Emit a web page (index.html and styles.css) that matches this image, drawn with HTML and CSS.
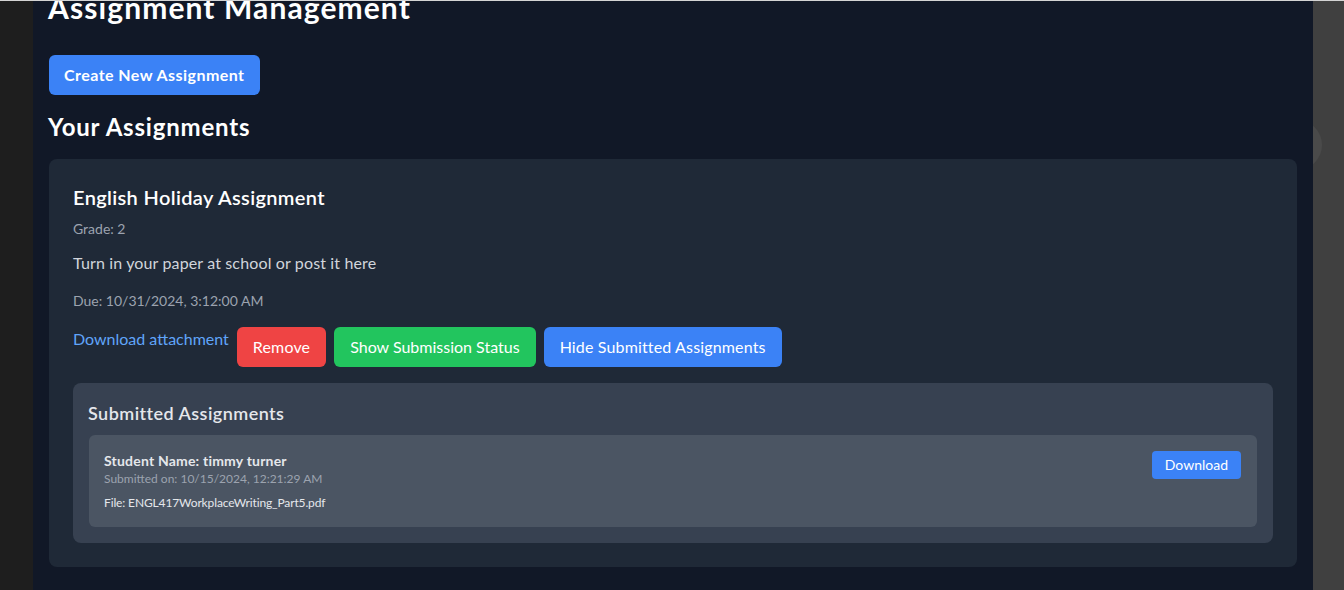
FILE: index.html
```html
<!DOCTYPE html>
<html lang="en">
<head>
<meta charset="utf-8">
<title>Assignment Management</title>
<link rel="stylesheet" href="styles.css">
</head>
<body>
<div class="topline"></div>
<div class="frame">
  <div class="side-left"></div>
  <main class="main">
    <h1 class="page-title">Assignment Management</h1>
    <button class="btn btn-create">Create New Assignment</button>
    <h2 class="section-title">Your Assignments</h2>
    <section class="card">
      <h3 class="card-title">English Holiday Assignment</h3>
      <p class="meta">Grade: 2</p>
      <p class="desc">Turn in your paper at school or post it here</p>
      <p class="meta due">Due: 10/31/2024, 3:12:00 AM</p>
      <div class="actions">
        <a class="link" href="#">Download attachment</a>
        <button class="btn btn-red">Remove</button>
        <button class="btn btn-green">Show Submission Status</button>
        <button class="btn btn-blue">Hide Submitted Assignments</button>
      </div>
      <div class="submitted">
        <h4 class="submitted-title">Submitted Assignments</h4>
        <div class="sub-item">
          <div class="sub-info">
            <p class="sub-name">Student Name: timmy turner</p>
            <p class="sub-date">Submitted on: 10/15/2024, 12:21:29 AM</p>
            <p class="sub-file">File: ENGL417WorkplaceWriting_Part5.pdf</p>
          </div>
          <button class="btn btn-small">Download</button>
        </div>
      </div>
    </section>
  </main>
  <div class="side-right"><span class="ghost-circle"></span></div>
</div>
</body>
</html>
```

FILE: styles.css
```css
* { box-sizing: border-box; }
html, body { margin: 0; padding: 0; height: 100%; overflow: hidden; }
body {
  font-family: "Lato", "Open Sans", sans-serif;
  background: #111827;
  color: #fff;
  position: relative;
}
.topline {
  position: absolute; top: 0; left: 0; right: 0; height: 1px;
  background: #d4d4d4; z-index: 5;
}
.frame { display: flex; height: 100%; }
.side-left { width: 33px; flex: none; background: #1e1e1e; }
.side-right { width: 31px; flex: none; background: #404040; position: relative; overflow: hidden; }
.ghost-circle {
  position: absolute; left: -41px; top: 120px; width: 50px; height: 50px;
  border-radius: 50%; background: #4a4a4a;
}
.main { width: 1280px; flex: none; background: #111827; padding: 0 15px; }
p, h1, h2, h3, h4 { margin: 0; }
.page-title { font-size: 30px; line-height: 36px; font-weight: 700; margin-top: -11px; margin-bottom: 30px; letter-spacing: 1.1px; }
.btn {
  font-family: inherit; border: 0; color: #fff; border-radius: 6px;
  font-size: 16px; line-height: 24px; padding: 8px 16px; cursor: pointer;
}
.btn-create { background: #3b82f6; font-weight: 700; letter-spacing: 0.45px; margin-left: 1px; padding: 8px 15px; }
.section-title { font-size: 24px; line-height: 32px; font-weight: 700; margin-top: 16px; margin-bottom: 16px; letter-spacing: 0.8px; }
.card { background: #1f2937; border-radius: 8px; padding: 24px; margin-left: 1px; margin-right: 1px; }
.card-title { font-size: 20px; line-height: 28px; font-weight: 600; margin-bottom: 8px; letter-spacing: 0.35px; }
.meta { font-size: 14px; line-height: 20px; color: #9ca3af; }
.desc { font-size: 16px; line-height: 24px; color: #d1d5db; margin-top: 12px; letter-spacing: 0.14px; }
.due { margin-top: 16px; }
.actions { display: flex; align-items: flex-start; gap: 8px; margin-top: 16px; }
.link { color: #60a5fa; text-decoration: none; font-size: 16px; line-height: 24px; }
.btn-red { background: #ef4444; letter-spacing: 0.15px; }
.btn-green { background: #22c55e; }
.btn-blue { background: #3b82f6; letter-spacing: 0.15px; }
.submitted { background: #374151; border-radius: 8px; padding: 16px 16px 16px 15px; margin-top: 16px; }
.submitted-title { font-size: 18px; line-height: 28px; font-weight: 600; color: #e5e7eb; margin-bottom: 8px; letter-spacing: 0.45px; }
.sub-item { background: #4b5563; border-radius: 6px; padding: 16px 16px 16px 15px; margin-left: 1px; display: flex; justify-content: space-between; align-items: flex-start; }
.sub-name { font-size: 14px; line-height: 20px; font-weight: 700; color: #e5e7eb; letter-spacing: 0.2px; }
.sub-date { font-size: 12px; line-height: 16px; color: #9ca3af; }
.sub-file { font-size: 12px; line-height: 16px; color: #e5e7eb; margin-top: 8px; letter-spacing: -0.13px; }
.btn-small { background: #3b82f6; font-size: 14px; line-height: 20px; padding: 4px 13px; border-radius: 4px; }
```
